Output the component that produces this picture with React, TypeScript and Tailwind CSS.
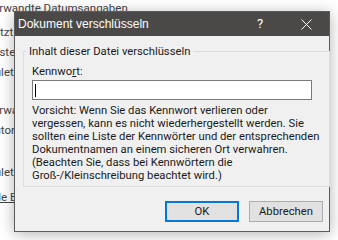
import { FC } from 'react';

const bgLines = [
  { text: 'Verwandte Datumsangaben', cls: 'mt-[1px] -ml-[14px]' },
  { text: 'Zuletzt geändert', cls: 'mt-[10px] -ml-[22px]' },
  { text: 'Erstellt', cls: 'mt-[6px] -ml-[11px]' },
  { text: 'Zuletzt gedruckt', cls: 'mt-[6px] -ml-[12px]' },
  { text: 'Verwandte Personen', cls: 'mt-[24px] -ml-[14px]' },
  { text: 'Autor', cls: 'mt-[6px] -ml-[13px]' },
  { text: 'Zuletzt geändert von', cls: 'mt-[28px] -ml-[12px]' },
];

const warning = [
  'Vorsicht: Wenn Sie das Kennwort verlieren oder',
  'vergessen, kann es nicht wiederhergestellt werden. Sie',
  'sollten eine Liste der Kennwörter und der entsprechenden',
  'Dokumentnamen an einem sicheren Ort verwahren.',
  '(Beachten Sie, dass bei Kennwörtern die',
  'Groß-/Kleinschreibung beachtet wird.)',
];

const App: FC = () => {
  return (
    <div
      className="relative w-[338px] h-[240px] overflow-hidden bg-white"
      style={{ fontFamily: 'Roboto, "Liberation Sans", sans-serif' }}
    >
      {/* Word info panel behind the dialog */}
      <div className="flex flex-col text-[11.5px] leading-[14px] text-[#444] whitespace-nowrap">
        {bgLines.map((l, i) => (
          <div key={i} className={l.cls}>
            {l.text}
          </div>
        ))}
        <div className="mt-[11px] -ml-[12px] underline">Alle Eigenschaften anzeigen</div>
      </div>

      {/* Dialog */}
      <div className="absolute left-[14px] top-[11px] w-[316px] h-[221px] flex flex-col border border-[#5b5b5b] bg-[#f0f0f0] shadow-[0_2px_14px_rgba(0,0,0,0.3)]">
        <div className="h-[24px] flex items-center bg-[#4a4947] text-white">
          <span
            className="pl-[3px] text-[12px] leading-[14px] flex-1"
            style={{ fontFamily: '"Liberation Sans", Arial, sans-serif' }}
          >
            Dokument verschlüsseln
          </span>
          <div className="w-[46px] h-full flex items-center justify-center text-[13px]">?</div>
          <div className="w-[46px] h-full flex items-center justify-center">
            <svg width="11" height="11" viewBox="0 0 11 11">
              <path d="M0.5 0.5 L10.5 10.5 M10.5 0.5 L0.5 10.5" stroke="#fff" strokeWidth="1" fill="none" />
            </svg>
          </div>
        </div>

        <div className="flex flex-col flex-1 text-[#1a1a1a] text-[11.25px]">
          <fieldset className="mt-[8px] ml-[8px] mr-[6px] border border-[#dcdcdc] pl-[8px] pr-[10px] pb-[4px]">
            <legend className="-ml-[6px] px-[3px] leading-[15px]">Inhalt dieser Datei verschlüsseln</legend>
            <div className="mt-[5px] leading-[15px]">
              Kennwo<span className="underline">r</span>t:
            </div>
            <div className="mt-[1px] w-[280px] h-[20px] border border-[#7a7a7a] bg-white flex items-center pl-[2px]">
              <div className="w-px h-[13px] bg-black" />
            </div>
            <div className="mt-[4px] flex flex-col leading-[13px] whitespace-nowrap">
              {warning.map((w, i) => (
                <span key={i}>{w}</span>
              ))}
            </div>
          </fieldset>

          <div className="mt-[14px] mr-[6px] flex justify-end gap-[10px]">
            <button className="w-[74px] h-[21px] border-2 border-[#0078d7] bg-[#e1e1e1] leading-none">OK</button>
            <button className="w-[74px] h-[21px] border border-[#adadad] bg-[#e1e1e1] leading-none">Abbrechen</button>
          </div>
        </div>
      </div>
    </div>
  );
};

export default App;
